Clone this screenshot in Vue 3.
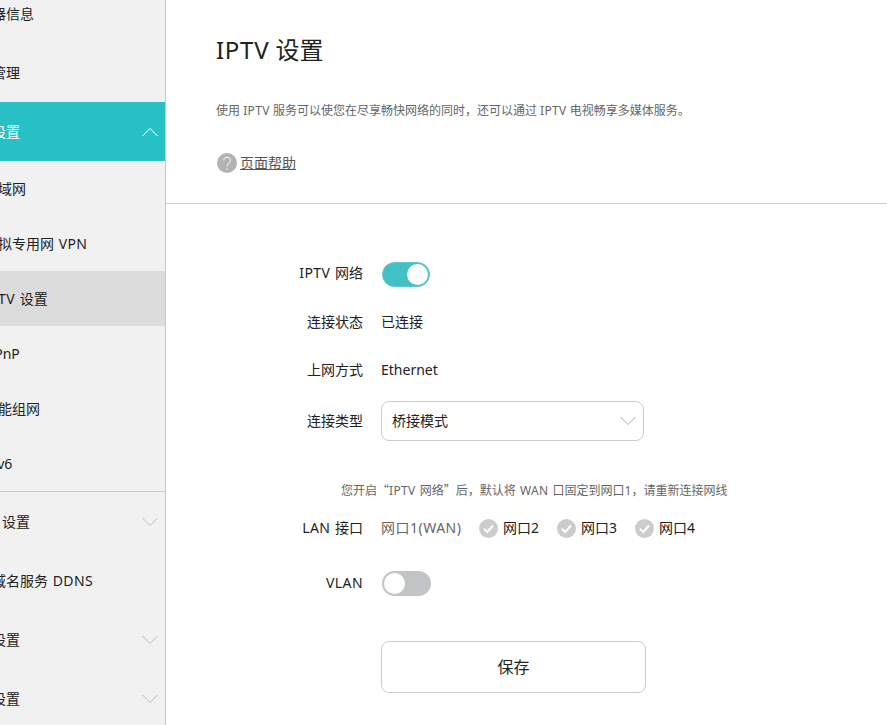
<script setup>
const ports = ['网口2', '网口3', '网口4']
const navTop = [
  { t: '路由器信息', cls: '' },
  { t: '设备管理', cls: '' },
  { t: '网络设置', cls: 'active', arrow: 'up' }
]
const navSub = [
  { t: '局域网' },
  { t: '虚拟专用网 VPN' },
  { t: 'IPTV 设置', cls: 'current' },
  { t: 'UPnP' },
  { t: '智能组网' },
  { t: 'IPv6' }
]
const navBottom = [
  { t: 'WAN 设置', arrow: 'down' },
  { t: '动态域名服务 DDNS' },
  { t: '安全设置', arrow: 'down' },
  { t: '系统设置', arrow: 'down' }
]
const parts = (s) => s.split(/([A-Z]{3,})/).filter(Boolean)
const isCaps = (s) => /^[A-Z]{3,}$/.test(s)
</script>

<template>
  <div class="page">
    <aside class="sidebar">
      <div v-for="n in navTop" :key="n.t" class="top" :class="n.cls">
        <span>{{ n.t }}</span>
        <svg v-if="n.arrow" class="arrow" width="16" height="10" viewBox="0 0 16 10"><path d="M.5 9 8 1.500 15.500 9" fill="none" stroke="#fff" stroke-width="1"/></svg>
      </div>
      <div class="subs">
        <div v-for="n in navSub" :key="n.t" class="sub" :class="n.cls">
          <span><span v-for="p in parts(n.t)" :key="p" :class="{ latin: isCaps(p) }">{{ p }}</span></span>
        </div>
      </div>
      <div v-for="n in navBottom" :key="n.t" class="top">
        <span><span v-for="p in parts(n.t)" :key="p" :class="{ latin: isCaps(p) }">{{ p }}</span></span>
        <svg v-if="n.arrow" class="arrow" width="16" height="10" viewBox="0 0 16 10"><path d="M.5 1 8 8.500 15.500 1" fill="none" stroke="#bbb" stroke-width="1"/></svg>
      </div>
    </aside>
    <main class="main">
      <header class="head">
        <h1><span class="latin">IPTV</span> 设置</h1>
        <p class="desc">使用 <span class="latin">IPTV</span> 服务可以使您在尽享畅快网络的同时，还可以通过 <span class="latin">IPTV</span> 电视畅享多媒体服务。</p>
        <div class="help">
          <svg class="qmark" width="20" height="20" viewBox="0 0 20 20"><circle cx="10" cy="10" r="10" fill="#b2b2b2"/><path d="M6.600 7.600a3.400 3.400 0 1 1 5.400 2.700c-1.300.9-2 1.600-2 3.200" fill="none" stroke="#eee" stroke-width="1.100"/><circle cx="10" cy="16" r=".8" fill="#eee"/></svg>
          <a class="helplink">页面帮助</a>
        </div>
      </header>
      <section class="form">
        <div class="row">
          <label class="raised"><span class="latin">IPTV</span> 网络</label>
          <span class="toggle on"><i></i></span>
        </div>
        <div class="row">
          <label>连接状态</label>
          <span>已连接</span>
        </div>
        <div class="row">
          <label>上网方式</label>
          <span>Ethernet</span>
        </div>
        <div class="row selrow">
          <label>连接类型</label>
          <div class="select">
            <span>桥接模式</span>
            <svg width="16" height="10" viewBox="0 0 16 10"><path d="M.5 1 8 8.500 15.500 1" fill="none" stroke="#aaa" stroke-width="1"/></svg>
          </div>
        </div>
        <p class="note">您开启<span class="cjk">“</span><span class="latin">IPTV</span> 网络<span class="cjk">”</span>后，默认将 <span class="latin">WAN</span> 口固定到网口1，请重新连接网线</p>
        <div class="row lan">
          <label><span class="latin">LAN</span> 接口</label>
          <span class="wan">网口1(WAN)</span>
          <span v-for="p in ports" :key="p" class="port">
            <svg width="19" height="19" viewBox="0 0 19 19"><circle cx="9.500" cy="9.500" r="9.500" fill="#ccc"/><path d="M5 9.800 8.200 13 14 6.500" fill="none" stroke="#fff" stroke-width="2"/></svg>
            <span>{{ p }}</span>
          </span>
        </div>
        <div class="row vlan">
          <label><span class="latin">VLAN</span></label>
          <span class="toggle off"><i></i></span>
        </div>
        <button class="save" type="button">保存</button>
      </section>
    </main>
  </div>
</template>

<style scoped>
.page {
  display: flex;
  width: 887px;
  height: 725px;
  overflow: hidden;
  background: #fff;
  color: #222;
  font: 14px/20px "Noto Sans", "Noto Sans CJK SC", sans-serif;
  word-spacing: 1px;
}
.latin {
  letter-spacing: 0.03em;
}
.sidebar {
  flex: none;
  width: 205px;
  height: 760px;
  margin: -16px 0 0 -40px;
  background: #f1f1f1;
  border-right: 1px solid #c8c8c8;
}
.top {
  position: relative;
  display: flex;
  align-items: center;
  height: 59px;
  padding-left: 4px;
}
.top.active {
  background: #28c0c7;
  color: #fff;
}
.arrow {
  position: absolute;
  right: 7px;
  top: 25px;
}
.subs {
  border-bottom: 1px solid #ccc;
}
.sub {
  display: flex;
  align-items: center;
  height: 55px;
  padding-left: 24px;
}
.sub.current {
  background: #dcdcdc;
}
.main {
  flex: 1;
  min-width: 0;
}
.head {
  height: 203px;
  padding-left: 50px;
  border-bottom: 1px solid #ccc;
  overflow: hidden;
}
h1 {
  margin: 33px 0 0;
  font-size: 24px;
  line-height: 34px;
  font-weight: 400;
  color: #222;
  word-spacing: 0;
}
.desc {
  margin: 35px 0 0;
  font-size: 12px;
  line-height: 18px;
  color: #666;
  word-spacing: 0;
}
.help {
  display: flex;
  align-items: center;
  margin: 33px 0 0 1px;
  height: 20px;
}
.qmark {
  flex: none;
}
.helplink {
  margin-left: 3px;
  color: #555;
  text-decoration: underline;
}
.form {
  padding-top: 46px;
}
.row {
  display: flex;
  align-items: center;
  height: 48px;
}
.row label {
  flex: none;
  width: 197px;
  margin-right: 18px;
  text-align: right;
}
.row label.raised {
  margin-bottom: 3px;
}
.toggle {
  display: block;
  position: relative;
  box-sizing: border-box;
  height: 25px;
  border-radius: 13px;
}
.toggle.on {
  width: 48px;
  margin-left: 1px;
  background: #41c0c6;
  border: 1px solid #5cc9cf;
}
.toggle.off {
  width: 49px;
  margin-left: 1px;
  background: #c2c4c5;
}
.toggle i {
  position: absolute;
  top: 2px;
  width: 21px;
  height: 21px;
  border-radius: 50%;
  background: #fff;
}
.toggle.on i {
  top: 1px;
  right: 1px;
}
.toggle.off i {
  left: 2px;
}
.selrow {
  height: 40px;
  margin-top: 7px;
}
.select {
  display: flex;
  align-items: center;
  justify-content: space-between;
  box-sizing: border-box;
  width: 263px;
  height: 40px;
  padding: 0 7px 0 10px;
  border: 1px solid #ccc;
  border-radius: 8px;
}
.note {
  height: 20px;
  margin: 39px 0 0 175px;
  font-size: 12px;
  line-height: 20px;
  color: #666;
}
.cjk {
  font-family: "Noto Sans CJK SC", sans-serif;
}
.lan {
  height: 30px;
  margin-top: 13px;
}
.wan {
  width: 98px;
  color: #666;
  letter-spacing: 0.5px;
}
.port {
  display: flex;
  align-items: center;
  gap: 5px;
  width: 78px;
}
.vlan {
  height: 30px;
  margin-top: 25px;
}
.save {
  display: block;
  width: 265px;
  height: 52px;
  margin: 43px 0 0 215px;
  border: 1px solid #ccc;
  border-radius: 8px;
  background: #fff;
  color: #222;
  font: inherit;
  font-size: 16px;
}
</style>

<style>
html, body { margin: 0; overflow: hidden; background: #fff; }
</style>
